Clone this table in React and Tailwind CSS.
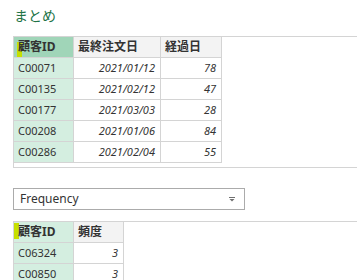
const FONT = "font-['Segoe_UI','Noto_Sans','Noto_Sans_CJK_JP',sans-serif]";

const orders = [
  ["C00071", "2021/01/12", "78"],
  ["C00135", "2021/02/12", "47"],
  ["C00177", "2021/03/03", "28"],
  ["C00208", "2021/01/06", "84"],
  ["C00286", "2021/02/04", "55"],
];

const freq = [
  ["C06324", "3"],
  ["C00850", "3"],
];

function Marker({ className }) {
  return <span className={`absolute w-[5px] bg-[#c6e000] ${className}`} />;
}

function HeadCell({ children, first, dark, marker }) {
  return (
    <div
      className={`relative h-[21px] border-r border-b border-[#d4d4d4] px-[4px] flex items-center text-[12px] font-bold text-[#333] ${
        first ? (dark ? "bg-[#a0d5b8]" : "bg-[#d4eee0]") : "bg-[#f3f3f3]"
      }`}
    >
      {marker}
      <span className="relative">{children}</span>
    </div>
  );
}

function Cell({ children, first, right, italic }) {
  return (
    <div
      className={`h-[21px] border-r border-b border-[#d4d4d4] flex items-center text-[11px] text-[#333] ${
        first ? "bg-[#d4eee0] px-[4px]" : "bg-white pl-[4px] pr-[5px]"
      } ${right ? "justify-end" : ""} ${italic ? "italic" : ""}`}
    >
      {children}
    </div>
  );
}

export default function App() {
  return (
    <div className={`w-[357px] h-[280px] overflow-hidden bg-white ${FONT}`}>
      <div className="pl-[14px] pt-[5px] h-[36px] text-[14px] leading-[20px] text-[#217346] font-['Noto_Sans_CJK_JP',sans-serif]">
        まとめ
      </div>

      <div className="ml-[13px] h-[132px] border-t border-b border-l border-[#d4d4d4]">
        <div className="grid grid-cols-[60px_87px_61px]">
          <HeadCell first dark marker={<Marker className="left-[3px] top-[5px] h-[15px]" />}>
            顧客ID
          </HeadCell>
          <HeadCell>最終注文日</HeadCell>
          <HeadCell>経過日</HeadCell>
          {orders.map(([id, date, days]) => (
            <div key={id} className="contents">
              <Cell first>{id}</Cell>
              <Cell right italic>{date}</Cell>
              <Cell right italic>{days}</Cell>
            </div>
          ))}
        </div>
      </div>

      <div className="ml-[13px] mt-[20px] w-[232px] h-[22px] border border-[#ababab] flex items-center justify-between pl-[6px] pr-[9px] text-[12px] text-[#333]">
        <span>Frequency</span>
        <svg width="6" height="5" viewBox="0 0 6 5" className="text-[#707070]">
          <rect x="0" y="0" width="6" height="1" fill="currentColor" />
          <path d="M0.5 2 H5.5 L3 4.5 Z" fill="currentColor" />
        </svg>
      </div>

      <div className="ml-[13px] mt-[11px] border-t border-l border-[#d4d4d4]">
        <div className="grid grid-cols-[60px_50px]">
          <HeadCell first marker={<Marker className="left-0 top-[1px] h-[16px]" />}>
            顧客ID
          </HeadCell>
          <HeadCell>頻度</HeadCell>
          {freq.map(([id, n]) => (
            <div key={id} className="contents">
              <Cell first>{id}</Cell>
              <Cell right italic>{n}</Cell>
            </div>
          ))}
        </div>
      </div>
    </div>
  );
}
